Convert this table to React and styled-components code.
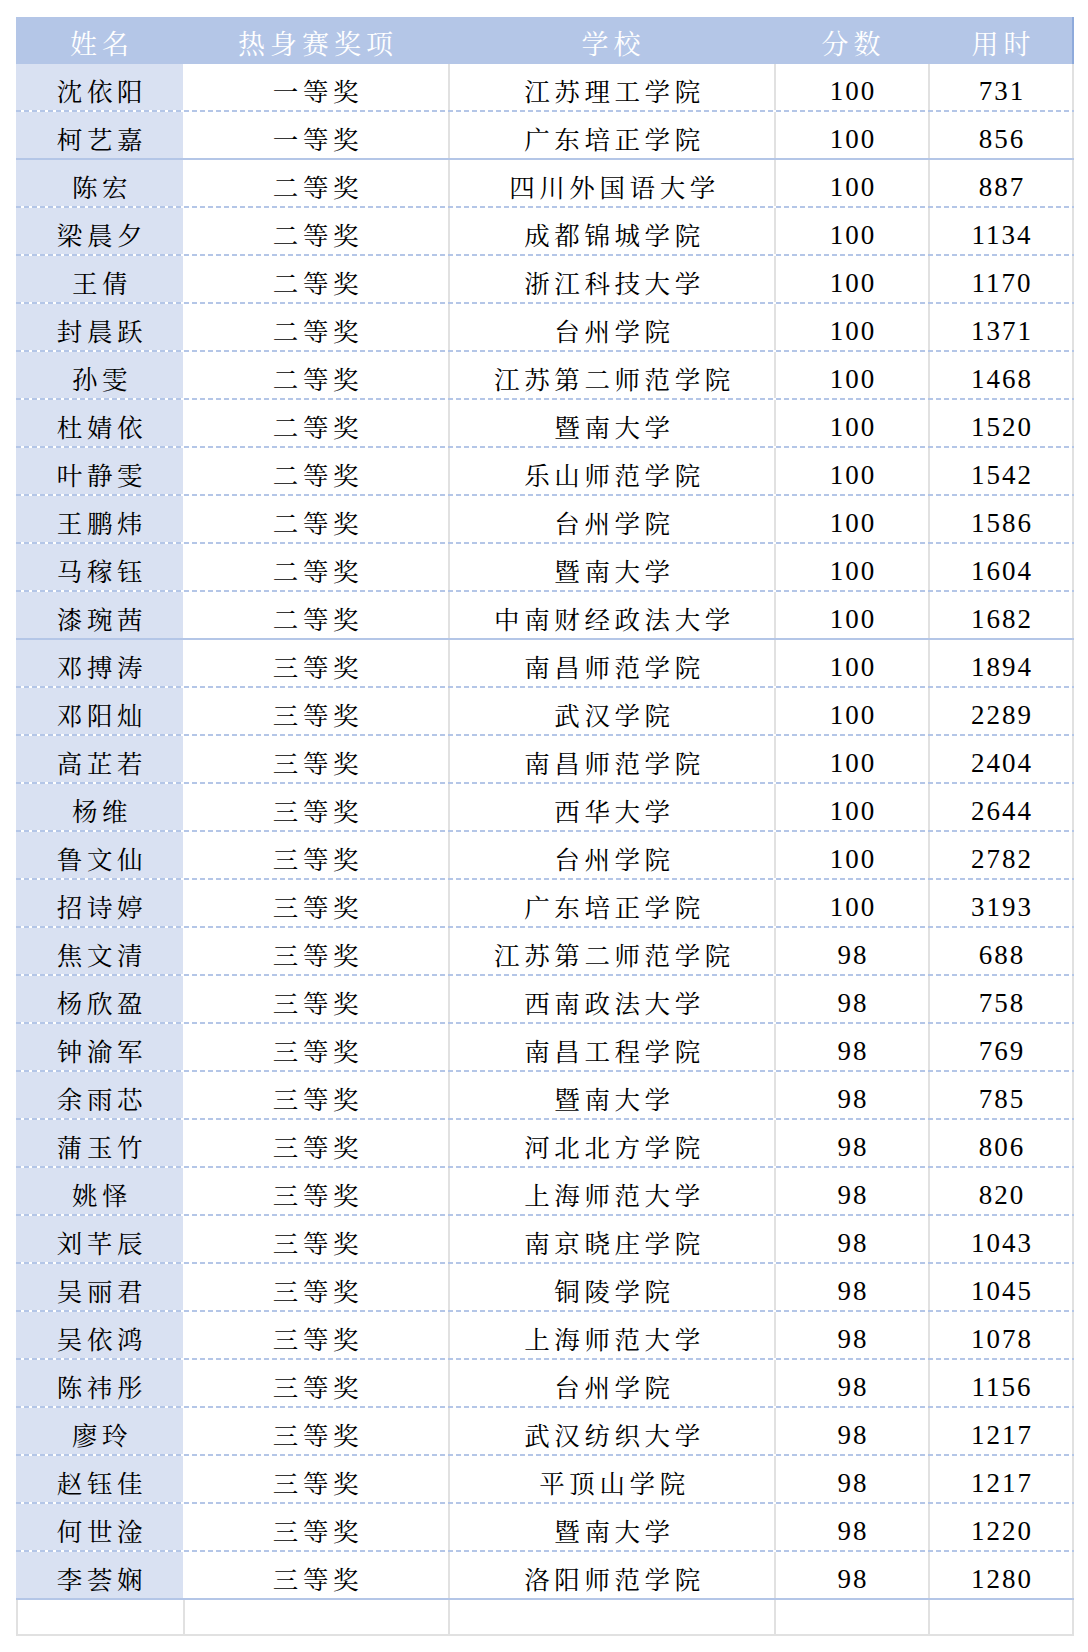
import React from "react";
import styled, { createGlobalStyle } from "styled-components";

const GlobalStyle = createGlobalStyle`
  html, body { margin: 0; padding: 0; background: #ffffff; }
  body {
    font-family: "Liberation Serif", "Noto Serif CJK SC", "Noto Sans CJK SC", serif;
    color: #000;
  }
`;

const COLS = "167px 265px 326px 154px 146px";
const BLUE = "#b4c6e7";
const FILL = "#d9e1f2";
const GRID = "#e1e1e1";

const Page = styled.div`
  padding: 17px 0 16px 16px;
  width: 1074px;
  box-sizing: border-box;
`;

const Table = styled.div`
  display: flex;
  flex-direction: column;
  width: 1058px;
`;

const HeaderRow = styled.div`
  display: grid;
  grid-template-columns: ${COLS};
  height: 47px;
  background: ${BLUE};
  box-shadow: inset -2px 0 0 #8eaadb;
`;

const HeadCell = styled.div`
  display: flex;
  align-items: center;
  justify-content: center;
  padding-top: 3px;
  padding-left: 5px;
  font-size: 27px;
  letter-spacing: 5px;
  color: #ffffff;
  font-family: "Noto Serif CJK SC", "Noto Sans CJK SC", sans-serif;
`;

const Row = styled.div`
  display: grid;
  grid-template-columns: ${COLS};
  height: 48px;
  padding-bottom: 2px;
  box-sizing: border-box;
  background: ${(p) =>
    p.$solid
      ? `linear-gradient(${BLUE}, ${BLUE}) left bottom / 100% 2px no-repeat`
      : `repeating-linear-gradient(to right, ${BLUE} 0 5px, transparent 5px 8px) left bottom / 100% 2px no-repeat`};
`;

const Cell = styled.div`
  display: flex;
  align-items: center;
  justify-content: center;
  padding-top: ${(p) => (p.$num ? "8px" : "5px")};
  padding-left: ${(p) => (p.$num ? "2px" : "5px")};
  box-sizing: border-box;
  background: ${(p) => (p.$fill ? FILL : "#ffffff")};
  border-left: ${(p) => (p.$line ? `2px solid ${GRID}` : "none")};
  border-right: ${(p) => (p.$last ? `2px solid ${GRID}` : "none")};
  font-size: ${(p) => (p.$num ? "27px" : "25.5px")};
  letter-spacing: ${(p) => (p.$num ? "2px" : "4.6px")};
  font-family: ${(p) =>
    p.$num
      ? `"Liberation Serif", serif`
      : `"Noto Serif CJK SC", "Noto Sans CJK SC", sans-serif`};
  white-space: nowrap;
`;

const EmptyRow = styled.div`
  display: grid;
  grid-template-columns: ${COLS};
  height: 36px;
  box-sizing: border-box;
  border-bottom: 2px solid ${GRID};
`;

const EmptyCell = styled.div`
  border-left: 2px solid ${GRID};
  border-right: ${(p) => (p.$last ? `2px solid ${GRID}` : "none")};
`;

const headers = ["姓名", "热身赛奖项", "学校", "分数", "用时"];

const rows = [
  ["沈依阳", "一等奖", "江苏理工学院", 100, 731],
  ["柯艺嘉", "一等奖", "广东培正学院", 100, 856, true],
  ["陈宏", "二等奖", "四川外国语大学", 100, 887],
  ["梁晨夕", "二等奖", "成都锦城学院", 100, 1134],
  ["王倩", "二等奖", "浙江科技大学", 100, 1170],
  ["封晨跃", "二等奖", "台州学院", 100, 1371],
  ["孙雯", "二等奖", "江苏第二师范学院", 100, 1468],
  ["杜婧依", "二等奖", "暨南大学", 100, 1520],
  ["叶静雯", "二等奖", "乐山师范学院", 100, 1542],
  ["王鹏炜", "二等奖", "台州学院", 100, 1586],
  ["马稼钰", "二等奖", "暨南大学", 100, 1604],
  ["漆琬茜", "二等奖", "中南财经政法大学", 100, 1682, true],
  ["邓搏涛", "三等奖", "南昌师范学院", 100, 1894],
  ["邓阳灿", "三等奖", "武汉学院", 100, 2289],
  ["高芷若", "三等奖", "南昌师范学院", 100, 2404],
  ["杨维", "三等奖", "西华大学", 100, 2644],
  ["鲁文仙", "三等奖", "台州学院", 100, 2782],
  ["招诗婷", "三等奖", "广东培正学院", 100, 3193],
  ["焦文清", "三等奖", "江苏第二师范学院", 98, 688],
  ["杨欣盈", "三等奖", "西南政法大学", 98, 758],
  ["钟渝军", "三等奖", "南昌工程学院", 98, 769],
  ["余雨芯", "三等奖", "暨南大学", 98, 785],
  ["蒲玉竹", "三等奖", "河北北方学院", 98, 806],
  ["姚怿", "三等奖", "上海师范大学", 98, 820],
  ["刘芊辰", "三等奖", "南京晓庄学院", 98, 1043],
  ["吴丽君", "三等奖", "铜陵学院", 98, 1045],
  ["吴依鸿", "三等奖", "上海师范大学", 98, 1078],
  ["陈祎彤", "三等奖", "台州学院", 98, 1156],
  ["廖玲", "三等奖", "武汉纺织大学", 98, 1217],
  ["赵钰佳", "三等奖", "平顶山学院", 98, 1217],
  ["何世淦", "三等奖", "暨南大学", 98, 1220],
  ["李荟娴", "三等奖", "洛阳师范学院", 98, 1280, true],
];

export default function App() {
  return (
    <>
      <GlobalStyle />
      <Page>
        <Table>
          <HeaderRow>
            {headers.map((h) => (
              <HeadCell key={h}>{h}</HeadCell>
            ))}
          </HeaderRow>
          {rows.map(([name, award, school, score, time, solid], i) => (
            <Row key={i} $solid={solid}>
              <Cell $fill>{name}</Cell>
              <Cell>{award}</Cell>
              <Cell $line>{school}</Cell>
              <Cell $line $num>
                {score}
              </Cell>
              <Cell $line $last $num>
                {time}
              </Cell>
            </Row>
          ))}
          <EmptyRow>
            {headers.map((h, i) => (
              <EmptyCell key={h} $last={i === headers.length - 1} />
            ))}
          </EmptyRow>
        </Table>
      </Page>
    </>
  );
}
